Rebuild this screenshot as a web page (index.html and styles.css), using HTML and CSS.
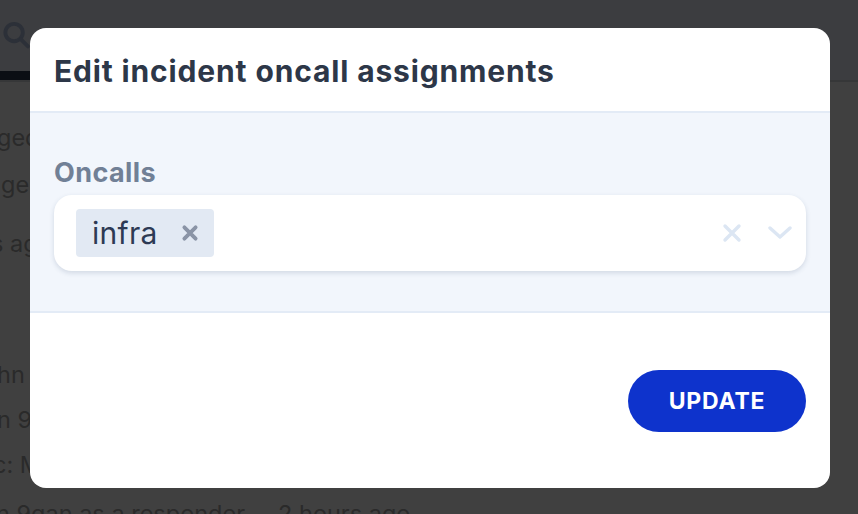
FILE: index.html
```html
<!DOCTYPE html>
<html>
<head>
<meta charset="utf-8">
<link rel="stylesheet" href="styles.css">
</head>
<body>
<div class="page">
  <header class="topbar">
    <div class="tab">
      <svg class="search" viewBox="0 0 24 24" width="30" height="30"><circle cx="10" cy="10" r="7.2" fill="none" stroke="#2c3038" stroke-width="3.2"/><line x1="15.5" y1="15.5" x2="21.5" y2="21.5" stroke="#2c3038" stroke-width="3.2" stroke-linecap="round"/></svg>
    </div>
  </header>
  <div class="feed">
    <p class="line l1">ged status to Investigating</p>
    <p class="line l2">ge severity to High</p>
    <p class="line l3">s ago</p>
    <p class="line l4">hn Doe</p>
    <p class="line l5">n 9gan</p>
    <p class="line l6">c: Mitigation</p>
    <p class="line l7">n 9gan as a responder<span class="ago">2 hours ago</span></p>
  </div>
</div>
<div class="overlay">
  <div class="modal">
    <div class="modal-header">
      <h2 class="title">Edit incident oncall assignments</h2>
    </div>
    <div class="modal-body">
      <label class="label">Oncalls</label>
      <div class="select">
        <div class="chips">
          <span class="chip">infra
            <svg class="chip-x" viewBox="0 0 16 16" width="18" height="18"><path d="M3 3L13 13M13 3L3 13" stroke="#8a94a6" stroke-width="3.4" stroke-linecap="round"/></svg>
          </span>
        </div>
        <div class="indicators">
          <svg class="clear" viewBox="0 0 20 20" width="20" height="20"><path d="M3 3L17 17M17 3L3 17" stroke="#dce6f3" stroke-width="3.4" stroke-linecap="round"/></svg>
          <svg class="chev" viewBox="0 0 24 14" width="24" height="14"><path d="M2 2L12 11L22 2" fill="none" stroke="#dce6f3" stroke-width="3.4" stroke-linecap="round" stroke-linejoin="round"/></svg>
        </div>
      </div>
    </div>
    <div class="modal-footer">
      <button class="btn">UPDATE</button>
    </div>
  </div>
</div>
</body>
</html>
```
FILE: styles.css
```css
* { box-sizing: border-box; }
html, body { margin: 0; padding: 0; }
body {
  width: 858px;
  height: 514px;
  overflow: hidden;
  background: #404040;
  font-family: Inter, "Noto Sans", "Liberation Sans", sans-serif;
  position: relative;
}
.page { width: 858px; height: 514px; }
.topbar {
  height: 82px;
  background: #3c3d40;
  border-bottom: 2px solid #363738;
  display: flex;
  align-items: flex-end;
}
.tab {
  width: 31px;
  height: 82px;
  border-bottom: 9px solid #0b0e14;
  display: flex;
  align-items: flex-start;
  padding-top: 22px;
}
.search { margin-left: 2px; }
.feed { padding: 0; color: #2a2a2a; font-size: 23.5px; }
.line { margin: 0; white-space: nowrap; line-height: 28px; }
.l1 { margin-top: 42px; text-indent: -3px; }
.l2 { margin-top: 19px; text-indent: 1px; }
.l3 { margin-top: 31px; text-indent: -9px; }
.l4 { margin-top: 103px; text-indent: -3px; }
.l5 { margin-top: 17px; text-indent: -3px; }
.l6 { margin-top: 17px; text-indent: -7px; }
.l7 { margin-top: 21px; text-indent: -4px; }
.ago { margin-left: 33px; }

.overlay {
  position: absolute;
  inset: 0;
  display: flex;
  align-items: flex-start;
  justify-content: flex-start;
  padding: 28px 0 0 30px;
}
.modal {
  width: 800px;
  height: 460px;
  background: #ffffff;
  border-radius: 16px;
  display: flex;
  flex-direction: column;
  overflow: hidden;
}
.modal-header {
  height: 85px;
  padding: 2px 24px 0;
  display: flex;
  align-items: center;
  border-bottom: 2px solid #e3ebf6;
}
.title {
  margin: 0;
  font-size: 30px;
  font-weight: 700;
  color: #2d3748;
  letter-spacing: 0.85px;
}
.modal-body {
  height: 200px;
  background: #f2f6fc;
  border-bottom: 2px solid #e3ebf6;
  padding: 44px 24px 0;
  display: flex;
  flex-direction: column;
}
.label {
  font-size: 27px;
  font-weight: 700;
  color: #718096;
  line-height: 32px;
  margin-bottom: 6px;
  letter-spacing: 0.4px;
}
.select {
  height: 76px;
  background: #ffffff;
  border-radius: 18px;
  box-shadow: 0 2px 5px rgba(40, 60, 100, 0.16);
  display: flex;
  align-items: center;
  justify-content: space-between;
  padding: 0 14px 0 22px;
}
.chip {
  height: 48px;
  width: 138px;
  background: #e2e9f3;
  border-radius: 4px;
  display: inline-flex;
  align-items: center;
  padding-left: 16px;
  font-size: 30px;
  color: #2d3a54;
  letter-spacing: 0.3px;
}
.chip-x { margin-left: 23px; }
.indicators {
  display: flex;
  align-items: center;
  gap: 26px;
}
.modal-footer {
  flex: 1;
  display: flex;
  justify-content: flex-end;
  align-items: flex-start;
  padding: 57px 24px 0;
}
.btn {
  width: 178px;
  height: 62px;
  border: none;
  border-radius: 31px;
  background: #0e33cc;
  color: #ffffff;
  font-family: Inter, "Noto Sans", "Liberation Sans", sans-serif;
  font-size: 23px;
  font-weight: 700;
  letter-spacing: 0.8px;
}
```
